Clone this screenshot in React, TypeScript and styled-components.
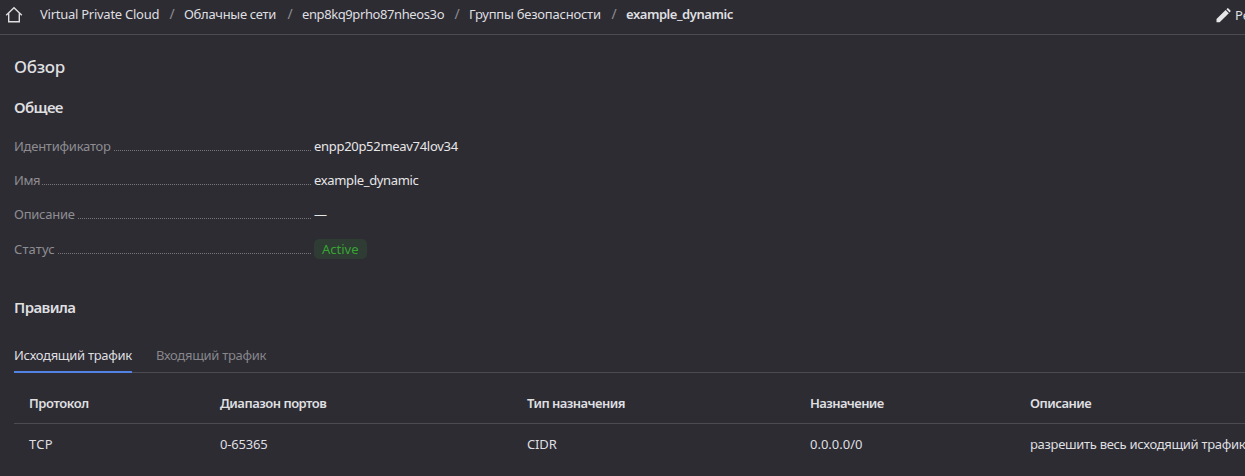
import React from 'react';
import styled, { createGlobalStyle } from 'styled-components';

const GlobalStyle = createGlobalStyle`
  *, *::before, *::after { box-sizing: border-box; }
  html, body { margin: 0; background: #2d2c33; overflow: hidden; }
  body {
    font-family: 'Noto Sans', 'Open Sans', sans-serif;
    font-size: 13px;
    line-height: 18px;
    color: #dfdfe0;
  }
`;

const Page = styled.div`
  width: 1245px;
  height: 476px;
  overflow: hidden;
`;

const Header = styled.header`
  display: flex;
  align-items: center;
  height: 35px;
  padding: 0 0 6px 5px;
  border-bottom: 1px solid #4c4b51;
  white-space: nowrap;
`;

const HomeIcon = styled.svg`
  flex: none;
  width: 18px;
  height: 18px;
  margin: 2px 17px 0 0;
`;

const Breadcrumbs = styled.nav`
  display: flex;
`;

const Crumb = styled.span<{ $width: number; $spacing: number; $current?: boolean }>`
  flex: none;
  width: ${(p) => p.$width}px;
  font-weight: ${(p) => (p.$current ? 600 : 400)};
  letter-spacing: ${(p) => p.$spacing}px;
`;

const Separator = styled.span`
  flex: none;
  width: 25px;
  padding-left: 1px;
  text-align: center;
  font-size: 14px;
  color: #8d8c90;
`;

const EditAction = styled.div`
  display: flex;
  flex: none;
  align-items: center;
  gap: 4px;
  margin: 2px 0 0 483px;
`;

const PencilIcon = styled.svg`
  width: 15px;
  height: 15px;
`;

const Content = styled.main`
  padding-left: 14px;
`;

const Title = styled.h1`
  margin: 0;
  padding-top: 20px;
  font-size: 17px;
  font-weight: 550;
  letter-spacing: -0.3px;
  line-height: 24px;
`;

const SectionTitle = styled.h2<{ $top: number }>`
  margin: 0;
  padding-top: ${(p) => p.$top}px;
  font-size: 15px;
  font-weight: 600;
  letter-spacing: -0.62px;
  line-height: 20px;
`;

const Details = styled.dl`
  margin: 0;
  padding-top: 20px;
`;

const DetailRow = styled.div<{ $height?: number }>`
  display: flex;
  height: ${(p) => p.$height ?? 34}px;
  align-items: flex-start;
`;

const Term = styled.dt<{ $width: number; $spacing?: number }>`
  display: flex;
  width: 297px;
  margin-right: 3px;
  color: #8e8d92;
  letter-spacing: ${(p) => p.$spacing ?? -0.25}px;

  &::after {
    content: '';
    flex: 1;
    height: 14px;
    margin-left: 2px;
    border-bottom: 1px dotted #77767b;
  }

  > span { width: ${(p) => p.$width}px; white-space: nowrap; }
`;

const Value = styled.dd<{ $spacing?: number }>`
  margin: 0;
  color: #e6e6e7;
  letter-spacing: ${(p) => p.$spacing ?? 0}px;
`;

const Status = styled.span`
  display: block;
  height: 20px;
  margin-top: -1px;
  padding: 0 8px;
  border-radius: 5px;
  background: #2e3c33;
  color: #38a434;
  line-height: 20px;
`;

const Tabs = styled.div`
  display: flex;
  gap: 24px;
  height: 38px;
  margin-top: 18px;
  box-shadow: inset 0 -1px #4c4b51;
`;

const Tab = styled.div<{ $active?: boolean }>`
  height: 38px;
  padding-top: 11px;
  letter-spacing: -0.29px;
  color: ${(p) => (p.$active ? '#dfdfe0' : '#87868b')};
  border-bottom: ${(p) => (p.$active ? '2px solid #5282e3' : '0')};
`;

const TableRow = styled.div<{ $head?: boolean }>`
  display: grid;
  grid-template-columns: 191px 307px 283px 220px 1fr;
  align-items: center;
  height: ${(p) => (p.$head ? 51 : 40)}px;
  padding: ${(p) => (p.$head ? '9px 0 0 15px' : '0 0 0 15px')};
  border-bottom: ${(p) => (p.$head ? '1px solid #4c4b51' : '0')};
  font-weight: ${(p) => (p.$head ? 600 : 400)};
  white-space: nowrap;
`;

const Cell = styled.span<{ $spacing: number }>`
  letter-spacing: ${(p) => p.$spacing}px;
`;

const columns = [
  { text: 'Протокол', spacing: -0.42 },
  { text: 'Диапазон портов', spacing: -0.5 },
  { text: 'Тип назначения', spacing: -0.54 },
  { text: 'Назначение', spacing: -0.6 },
  { text: 'Описание', spacing: -0.5 },
];

const rule = [
  { text: 'TCP', spacing: 0.3 },
  { text: '0-65365', spacing: -0.2 },
  { text: 'CIDR', spacing: -0.15 },
  { text: '0.0.0.0/0', spacing: 0 },
  { text: 'разрешить весь исходящий трафик', spacing: -0.31 },
];

export default function App() {
  return (
    <Page>
      <GlobalStyle />
      <Header>
        <HomeIcon viewBox="0 0 18 18" fill="none" stroke="#dfdfe0" strokeWidth="1.4">
          <path d="M1.2 9.2 9 1.8l7.8 7.4M3.7 7.5v8.2h10.6V7.5" />
        </HomeIcon>
        <Breadcrumbs>
          <Crumb $width={119} $spacing={-0.26}>Virtual Private Cloud</Crumb>
          <Separator>/</Separator>
          <Crumb $width={93} $spacing={-0.3}>Облачные сети</Crumb>
          <Separator>/</Separator>
          <Crumb $width={142} $spacing={-0.4}>enp8kq9prho87nheos3o</Crumb>
          <Separator>/</Separator>
          <Crumb $width={132} $spacing={-0.23}>Группы безопасности</Crumb>
          <Separator>/</Separator>
          <Crumb $width={107} $spacing={-0.45} $current>example_dynamic</Crumb>
        </Breadcrumbs>
        <EditAction>
          <PencilIcon viewBox="0 0 15 15" fill="#e6e6e7">
            <path d="M.5 11 9.6 2l3.2 3.2-9.1 9.1H.5ZM10.4 1.2l.8-.8q.6-.6 1.2 0l2 2q.6.6 0 1.2l-.8.8Z" />
          </PencilIcon>
          <span>Редактировать</span>
        </EditAction>
      </Header>
      <Content>
        <Title>Обзор</Title>
        <SectionTitle $top={18}>Общее</SectionTitle>
        <Details>
          <DetailRow>
            <Term $width={98}><span>Идентификатор</span></Term>
            <Value $spacing={-0.3}>enpp20p52meav74lov34</Value>
          </DetailRow>
          <DetailRow>
            <Term $width={26} $spacing={-0.45}><span>Имя</span></Term>
            <Value $spacing={-0.34}>example_dynamic</Value>
          </DetailRow>
          <DetailRow $height={35}>
            <Term $width={62}><span>Описание</span></Term>
            <Value>—</Value>
          </DetailRow>
          <DetailRow>
            <Term $width={42} $spacing={0.1}><span>Статус</span></Term>
            <Value><Status>Active</Status></Value>
          </DetailRow>
        </Details>
        <SectionTitle $top={23}>Правила</SectionTitle>
        <Tabs>
          <Tab $active>Исходящий трафик</Tab>
          <Tab>Входящий трафик</Tab>
        </Tabs>
        <TableRow $head>
          {columns.map((c) => <Cell key={c.text} $spacing={c.spacing}>{c.text}</Cell>)}
        </TableRow>
        <TableRow>
          {rule.map((c) => <Cell key={c.text} $spacing={c.spacing}>{c.text}</Cell>)}
        </TableRow>
      </Content>
    </Page>
  );
}
